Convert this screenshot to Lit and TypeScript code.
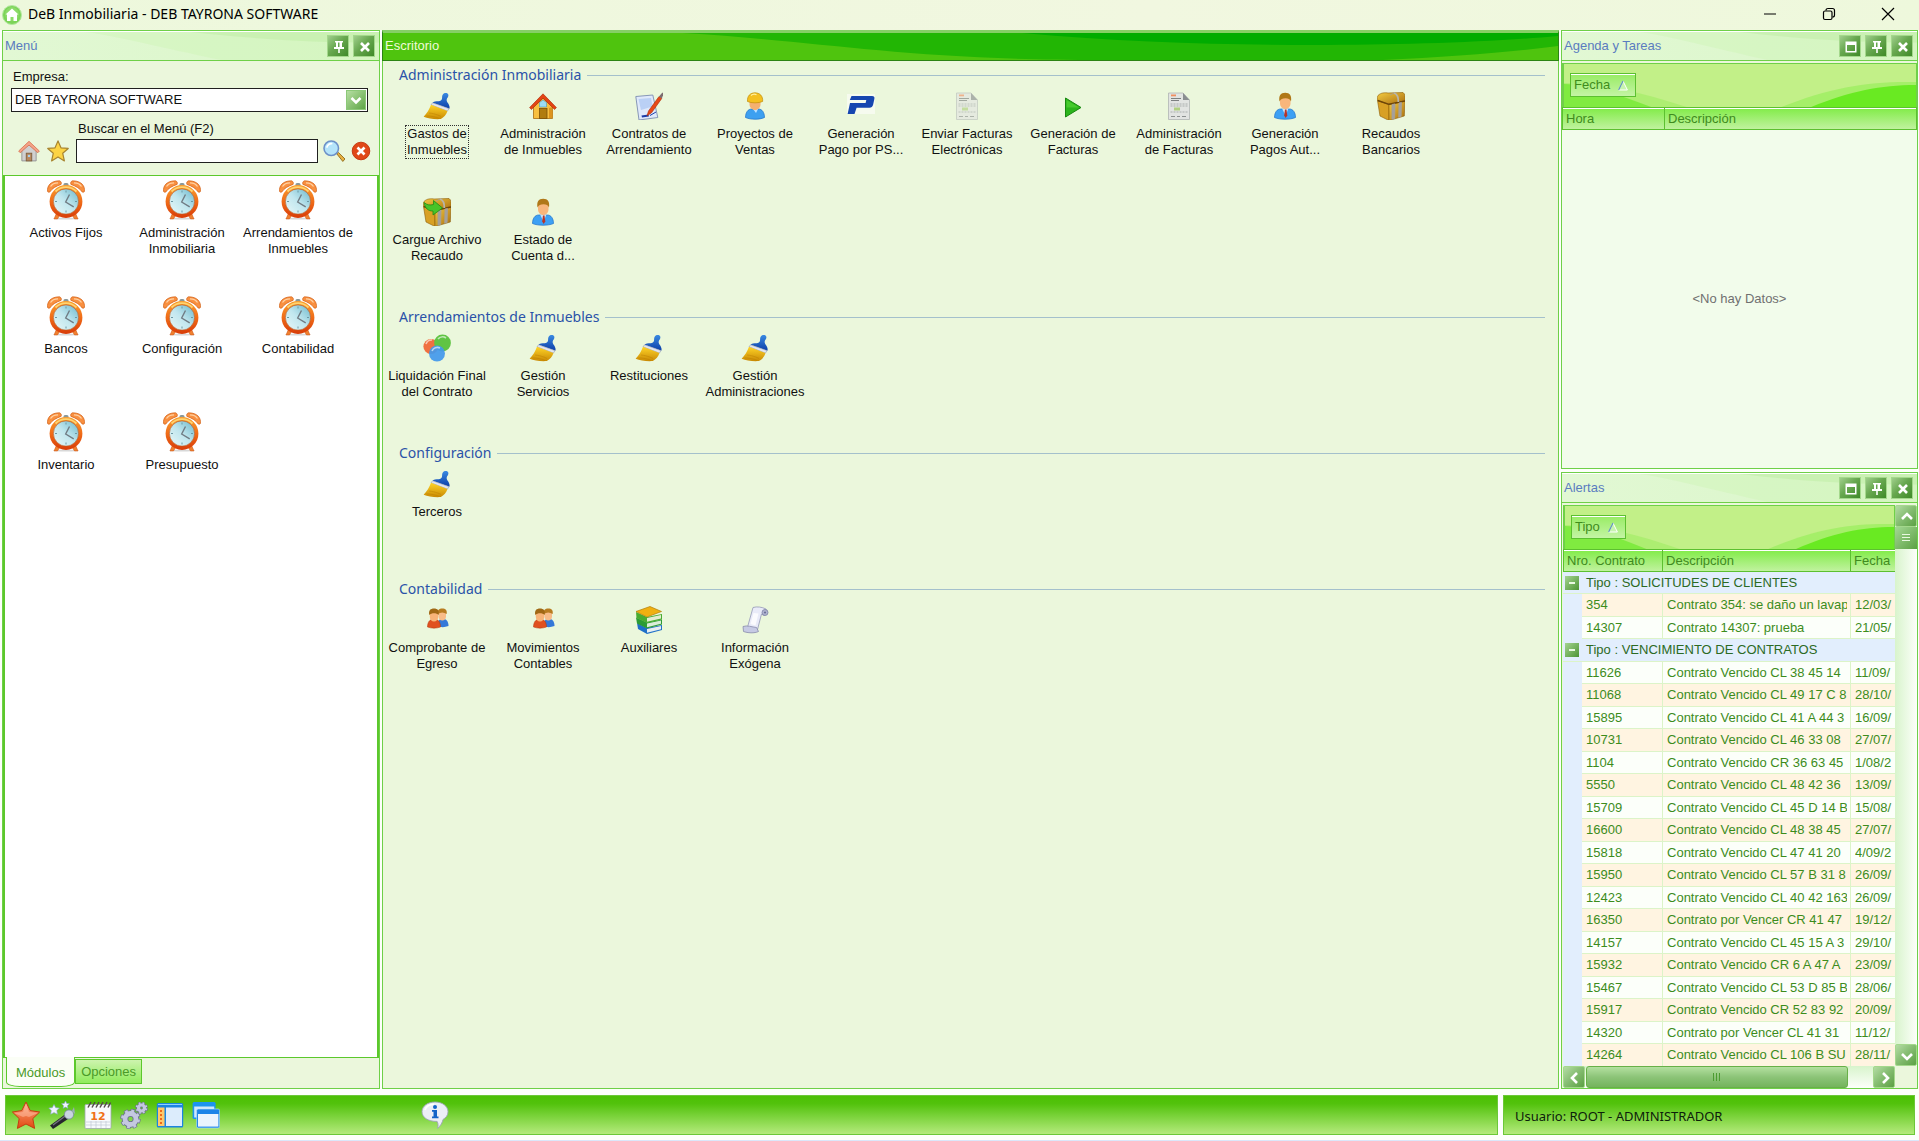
import { LitElement, html, css, nothing, TemplateResult } from "lit";
import { customElement, state } from "lit/decorators.js";
import { classMap } from "lit/directives/class-map.js";

/* ---------- desktop icons (28 x 28) ---------- */

const brush = html`<svg class="ico" viewBox="0 0 28 28" aria-hidden="true">
  <defs>
    <linearGradient id="brushY" x1="0" y1="0" x2="0" y2="1"><stop offset="0" stop-color="#ffd428" /><stop offset="1" stop-color="#c98a04" /></linearGradient>
    <linearGradient id="brushB" x1="0" y1="0" x2="0" y2="1"><stop offset="0" stop-color="#3a8ae2" /><stop offset="1" stop-color="#0c3ea8" /></linearGradient>
  </defs>
  <path d="M20 2.200c1.200-1.800 5.200-1.800 5.400.8.200 2-1.400 2.900-1.700 4.400-.3 1.400.6 2.600 1.400 3.800 1.200 2 2 3.800 1.200 5.600L9.600 10.800c.8-1.200 3.400-1.600 6-1.600 1.900-.1 3-.7 3.400-2.400.3-2-.1-3.200 1-4.600Z" fill="url(#brushB)" />
  <path d="M9.600 10.800 26 16.600l-1.600 2.500L8 12.800Z" fill="#e3e6ee" stroke="#7c88a8" stroke-width=".5" />
  <path d="M8 12.800 24.400 19.100c-.9 3.600-3.500 6.500-6.600 8C11.500 27.600 5 26.500.6 24.800 4 21.600 6.300 17 8 12.800Z" fill="url(#brushY)" />
  <path d="M3.400 24c4.200-.2 9.400.8 13 2.600M6 21c3 .2 8 1.400 12 3.400" fill="none" stroke="#b87800" stroke-width=".7" opacity=".6" />
</svg>`;

const house = html`<svg class="ico" viewBox="0 0 28 28" aria-hidden="true">
  <path d="M4.500 15 14 6l9.500 9v11.500h-19Z" fill="#f8c040" stroke="#a86c10" stroke-width=".8" />
  <path d="M20 16v10h3.500V15Z" fill="#dc9420" />
  <rect x="10.500" y="16.500" width="7.500" height="10" fill="#b07c10" stroke="#7c5008" stroke-width=".8" />
  <path d="M10.500 10.500 14 8l3.500 2.500V15h-7Z" fill="#9cdcf4" stroke="#4c9cc0" stroke-width=".6" />
  <path d="M.6 15.600 14 1.800l13.400 13.800-1.800 1.900L14 6.200 2.400 17.500Z" fill="#e44414" stroke="#a82808" stroke-width=".6" />
</svg>`;

const contract = html`<svg class="ico" viewBox="0 0 28 28" aria-hidden="true">
  <path d="m.8 4.500 17-1.500 5 22.500L4 28Z" fill="#dfe9fb" stroke="#7c8cb0" stroke-width=".9" />
  <path d="m3.500 7 12.500-1 1.500 8.500L6 18Z" fill="#a9c4f2" opacity=".7" />
  <path d="m6.500 23.500 7-1 .4 2-6.900 1Z" fill="#1c3ca8" />
  <path d="M15 23.500 21 20" stroke="#1c3ca8" stroke-width="1" />
  <path d="M13.500 19 24 4.500l2.800 1.900L16.500 20.800l-4.500 3Z" fill="#e84818" stroke="#a82c08" stroke-width=".6" />
  <path d="m24 4.500 3.400-4 1.300.9-1.900 5Z" fill="#7c6c70" />
</svg>`;

const builder = html`<svg class="ico" viewBox="0 0 28 28" aria-hidden="true">
  <path d="M4.500 25.500c0-5 2.500-8.500 6-8.500h7c3.500 0 6 3.500 6 8.500-5 2.300-14 2.300-19 0Z" fill="#3da0f0" stroke="#1c70c8" stroke-width=".7" />
  <path d="M12 17h5l-2 4Z" fill="#bfe2ff" />
  <path d="M8.500 8h11v4.500c0 3-2.600 5.500-5.500 5.500s-5.500-2.500-5.500-5.500Z" fill="#f4b070" />
  <path d="M6.500 9.500C6 4 9.300.8 14 .8s8.200 3.200 7.600 8.700c-4 1.800-11.200 1.800-15.100 0Z" fill="#f4c020" stroke="#c08c08" stroke-width=".7" />
  <path d="M10 3.500C11.500 2 14 2 15.500 2.600" stroke="#fff0a0" stroke-width="1.200" fill="none" />
</svg>`;

const pse = html`<svg class="ico" viewBox="0 0 28 28" aria-hidden="true">
  <rect y="2" width="28" height="20" fill="#fff" opacity=".55" />
  <path d="M4.500 4h20.500c2 0 2.800 1 2.400 2.800l-1.300 6c-.5 2-1.700 3-3.600 3H9.600L7.500 22H.6L3 11h15.600l.7-3H2.800Z" fill="#1646b0" fill-rule="evenodd" />
</svg>`;

const invoice = (faded: boolean) => html`<svg class=${faded ? "ico faded" : "ico"} viewBox="0 0 28 28" aria-hidden="true">
  <path d="M3.500 1H18l6.500 7v19.500h-21Z" fill="#e2e4e2" stroke="#b0b4b4" stroke-width=".8" />
  <path d="M18 1v7h6.500Z" fill="#8a8e90" />
  <rect x="6" y="2.500" width="5" height="1.800" fill="#f09060" />
  <path d="M6 6.500h10M6 8.500h8" stroke="#7c8080" stroke-width="1.200" />
  <path d="M5.500 12h17M5.500 14h17M5.500 20h17" stroke="#a4a8a8" stroke-width=".9" stroke-dasharray="2 1" />
  <rect x="9" y="15.500" width="6" height="3" fill="#b0d080" />
  <path d="M6 24.500h4M12 24.500h3M17 24.500h4" stroke="#8c9090" stroke-width="1.200" />
</svg>`;

const play = html`<svg class="ico" viewBox="0 0 28 28" aria-hidden="true">
  <path d="M6.500 6v19L22 15.500Z" fill="#2cb41c" stroke="#188810" stroke-width="1" />
  <path d="M7.500 8v7.500H20Z" fill="#5cdc3c" opacity=".55" />
</svg>`;

const person = html`<svg class="ico" viewBox="0 0 28 28" aria-hidden="true">
  <path d="M3.500 25.500c0-5 2.500-8.500 6-8.500h9c3.500 0 6 3.500 6 8.500-5 2.300-16 2.300-21 0Z" fill="#3da0f4" stroke="#1c70c8" stroke-width=".7" />
  <path d="M11 16.500h6.500l-3 7Z" fill="#c6e2f8" />
  <path d="m14 17.500 1.500 0 .8 6-1.600 2.500-1.500-2.500Z" fill="#b83428" />
  <path d="M9 6h10.500v5.500c0 3-2.400 5.500-5.200 5.500S9 14.500 9 11.500Z" fill="#f8b67c" />
  <path d="M8.500 9.500C7.500 4 9.500.8 14.200.8S21 4 20 9.500c-1-2.500-2.500-3.200-5.500-3.200S9.500 7 8.500 9.500Z" fill="#b07818" />
</svg>`;

const chest = (arrow: boolean) => html`<svg class="ico" viewBox="0 0 28 28" aria-hidden="true">
  <defs><linearGradient id="gold" x1="0" y1="0" x2="1" y2="1"><stop offset="0" stop-color="#f4cc40" /><stop offset="1" stop-color="#a86c10" /></linearGradient></defs>
  <path d="M.5 8.500 12 12.500v16L3 24Z" fill="#d8a024" stroke="#8c5c08" stroke-width=".6" />
  <path d="M12 12.500 28 9l-.7 15L12 28.500Z" fill="url(#gold)" stroke="#8c5c08" stroke-width=".6" />
  <path d="M1 3.500C4 .5 8 .5 11 1L26 .5c2 1 2.500 5 2 8.500L12 12.500.5 8.500C0 6.500.3 4.600 1 3.500Z" fill="url(#gold)" stroke="#8c5c08" stroke-width=".6" />
  <path d="M.8 8.500 12 12.300 28 9" fill="none" stroke="#6c4408" stroke-width="1.400" />
  <path d="m15 12.500 3-.6-.4 14.600-2.600.8ZM22 11l2.500-.6-.4 14-2.400.8ZM13 3l5-2.400" fill="#a4a09c" stroke="#a4a09c" stroke-width=".8" />
  <path d="M17 1c3 1 4.500 4 4.300 9" fill="none" stroke="#b8b4a8" stroke-width="1.800" />
  ${arrow
    ? html`<svg viewBox="0 0 28 28"><path d="M1 4.500c3 2.500 6 3 9.500 2V2.500l9 7.500-9.500 7v-4C5.500 13.200 2 10.500 1 4.500Z" fill="#48c428" stroke="#208c14" stroke-width=".8" /></svg>`
    : nothing}
</svg>`;

const bubbles = html`<svg class="ico" viewBox="0 0 28 28" aria-hidden="true">
  <circle cx="8" cy="12.500" r="7.600" fill="#f07040" /><circle cx="19.500" cy="9" r="8.400" fill="#60c444" /><circle cx="14" cy="19.500" r="8" fill="#4499ec" opacity=".93" />
  <path d="M3 10a6 6 0 0 1 6-4M15 5a6 6 0 0 1 8-1M9 17a6 6 0 0 1 8-3" fill="none" stroke="#fff" stroke-width="1.600" opacity=".6" />
</svg>`;

const people = html`<svg class="ico" viewBox="0 0 28 28" aria-hidden="true">
  <path d="M14 20c0-4 2-7 4.500-7h2.500c2.600 0 4.500 3 4.500 7-4 1.500-7.500 1.500-11.500 0Z" fill="#3478d8" />
  <path d="M15.500 6h7.500v4.500c0 2.400-1.600 4-3.700 4s-3.800-1.600-3.800-4Z" fill="#f8bc88" />
  <path d="M14.800 8c-.6-3.800 1.300-5.500 4.500-5.500s5 1.700 4.400 5.500c-3-2-6-2-8.900 0Z" fill="#b87c20" />
  <path d="M4.500 21c0-4.500 2-7.500 5-7.500h3c3 0 5 3 5 7.500-4 1.500-9 1.500-13 0Z" fill="#e05020" stroke="#b03408" stroke-width=".5" />
  <path d="M6.800 6.500h8.400v4.600c0 2.700-1.900 4.500-4.200 4.500s-4.200-1.800-4.200-4.500Z" fill="#f8b478" />
  <path d="M6.300 9C5.300 4.500 7.500 2.500 11 2.500s5.500 2 4.700 6.500C13.500 6.500 8.500 6.500 6.300 9Z" fill="#a06814" />
</svg>`;

const books = html`<svg class="ico" viewBox="0 0 28 28" aria-hidden="true">
  <path d="M2 17 12 22l15-3v5l-15 4L3 23Z" fill="#2070c8" /><path d="m12 23 14-3v3.200L12 26.800Z" fill="#e8eef0" />
  <path d="m1 11.500 11 5 15-3v5l-15 4L2 17.500Z" fill="#2c9c34" /><path d="m12 17.500 14-3v3.200l-14 3.500Z" fill="#dcecd8" />
  <path d="m1 6 11 5 15-3v5.500l-15 3.500L1.500 12Z" fill="#48ac30" /><path d="m12 12 14-3v3.500l-14 3.300Z" fill="#e4ecd0" />
  <path d="M1 5.500 15 .5l11.500 5L12 11Z" fill="#f0b010" stroke="#b07c08" stroke-width=".7" />
</svg>`;

const scroll = html`<svg class="ico" viewBox="0 0 28 28" aria-hidden="true">
  <path d="M12 1.500c4-1.200 9-.5 13 1.500l1.500 4-3.500 2.500-2.500-1.500-4.500 17.500L6 23Z" fill="#e9ebf8" stroke="#9498b8" stroke-width=".8" />
  <circle cx="24" cy="6.500" r="3" fill="#b0b4d0" stroke="#7c80a4" stroke-width=".8" /><circle cx="24" cy="6.500" r="1.100" fill="#6c7098" />
  <path d="M2 20.500c4-1.500 9 .5 13.500 1l2 4c-4 2-11 1.500-15 0Z" fill="#c6cae4" stroke="#888cac" stroke-width=".8" />
  <path d="m12.500 7-3 11 5 1.500 3-12Z" fill="#fff" opacity=".8" />
</svg>`;

const clock = html`<svg class="clock" viewBox="0 0 38 40" aria-hidden="true">
  <defs>
    <linearGradient id="ring" x1="0" y1="0" x2="0" y2="1"><stop offset="0" stop-color="#f9a030" /><stop offset=".5" stop-color="#f06c18" /><stop offset="1" stop-color="#d83c08" /></linearGradient>
    <linearGradient id="face" x1="1" y1="0" x2="0" y2="1"><stop offset="0" stop-color="#6cb8cc" /><stop offset=".5" stop-color="#c0e6ee" /><stop offset="1" stop-color="#e8f8f8" /></linearGradient>
  </defs>
  <ellipse cx="19" cy="38.600" rx="13" ry="1" fill="#d8d8d8" />
  <path d="m10 32-3 7h3.500l3-5ZM28 32l3 7h-3.500l-3-5Z" fill="#f08030" stroke="#c85010" stroke-width=".5" />
  <rect x="16.500" y="3" width="5" height="5" rx="1.500" fill="#8c9898" />
  <path d="M.6 11.500C-.2 6 3.500.8 12.500.8c1.600.5 2.200 2 1.600 3.600C9.500 6 5 8.300 2.800 12 1.800 12.400.9 12.200.6 11.500Z" fill="#f99040" stroke="#d05c10" stroke-width=".7" />
  <path d="M37.400 11.500C38.200 6 34.500.8 25.500.8c-1.600.5-2.200 2-1.600 3.600C28.500 6 33 8.300 35.200 12c1 .4 1.900.2 2.200-.5Z" fill="#f99040" stroke="#d05c10" stroke-width=".7" />
  <path d="M3.500 6.500C5 4 8 2.800 11 2.800M34.500 6.500C33 4 30 2.800 27 2.800" stroke="#ffd0a0" stroke-width="1.300" fill="none" />
  <circle cx="19" cy="21.500" r="16.400" fill="url(#ring)" />
  <path d="M8.500 11.500a14.600 14.600 0 0 1 21 0" stroke="#ffd470" stroke-width="1.800" fill="none" />
  <circle cx="19" cy="21.500" r="12.600" fill="url(#face)" stroke="#b85820" stroke-width=".6" />
  <path d="M19 10.500v2M19 30.500v2M8 21.500h2M28 21.500h2" stroke="#6c98a4" stroke-width="1" />
  <path d="m22.500 14.500-3.800 7.500 8 4.800" stroke="#707c84" stroke-width="1.400" fill="none" />
</svg>`;

/* ---------- small form icons ---------- */

const miniHouse = html`<svg class="mini" viewBox="0 0 20 20" aria-hidden="true">
  <path d="M3.500 9.500 10 4l6.500 5.500V19h-13Z" fill="#d0d0d0" stroke="#909090" stroke-width=".8" />
  <rect x="7.500" y="12" width="5" height="7" fill="#b8885c" stroke="#7c5c3c" stroke-width=".8" /><rect x="9" y="13.500" width="2" height="2" fill="#a8d0f0" />
  <path d="M.6 10 10 1.200 19.400 10 18 11.600 10 4.600 2 11.600Z" fill="#f4a488" stroke="#d86c4c" stroke-width=".7" />
</svg>`;

const miniStar = html`<svg class="mini" viewBox="0 0 20 20" aria-hidden="true">
  <path d="m10 .8 2.700 6.300 6.600.6-5 4.400 1.500 6.900L10 15.400 4.200 19l1.500-6.900-5-4.400 6.600-.6Z" fill="#fcd444" stroke="#a88430" stroke-width="1.100" stroke-linejoin="round" />
</svg>`;

const magnifier = html`<svg class="mini" viewBox="0 0 20 20" aria-hidden="true">
  <path d="m12.500 12.500 1.500-1.200 6 6-2 2.200Z" fill="#e8b040" stroke="#8c6818" stroke-width=".8" />
  <circle cx="7.500" cy="7.500" r="6.600" fill="#b4e4fa" stroke="#6c90c8" stroke-width="1.400" />
  <path d="M3.500 7a4.200 4.200 0 0 1 5-3.600" stroke="#fff" stroke-width="1.600" fill="none" />
</svg>`;

const clear = html`<svg class="mini" viewBox="0 0 20 20" aria-hidden="true">
  <circle cx="10" cy="10" r="8" fill="#e04818" stroke="#c03008" stroke-width=".8" />
  <path d="m6.800 6.800 6.400 6.400M13.200 6.800l-6.400 6.400" stroke="#fff" stroke-width="2.400" />
</svg>`;

/* ---------- panel buttons ---------- */

const glyphs: Record<string, TemplateResult> = {
  max: html`<svg viewBox="0 0 22 22" aria-hidden="true"><path fill-rule="evenodd" d="M5.500 5.500h11v11h-11Zm1.500 3.500v6h8v-6Z" fill="#fff" /></svg>`,
  pin: html`<svg viewBox="0 0 22 22" aria-hidden="true"><path fill-rule="evenodd" d="M7 5h8v1.500h-1V11h2v2h-4.200v4h-1.600v-4H6v-2h2V6.500H7Zm3 1.500V11h1.500V6.500Z" fill="#fff" /></svg>`,
  close: html`<svg viewBox="0 0 22 22" aria-hidden="true"><path d="m7 7 8 8M15 7l-8 8" stroke="#fff" stroke-width="2.600" /></svg>`,
  up: html`<svg viewBox="0 0 22 22" aria-hidden="true"><path d="m6 13 5-5 5 5" fill="none" stroke="#fff" stroke-width="2.600" /></svg>`,
  down: html`<svg viewBox="0 0 22 22" aria-hidden="true"><path d="m6 9 5 5 5-5" fill="none" stroke="#fff" stroke-width="2.600" /></svg>`,
  left: html`<svg viewBox="0 0 22 22" aria-hidden="true"><path d="m13 6-5 5 5 5" fill="none" stroke="#fff" stroke-width="2.600" /></svg>`,
  right: html`<svg viewBox="0 0 22 22" aria-hidden="true"><path d="m9 6 5 5-5 5" fill="none" stroke="#fff" stroke-width="2.600" /></svg>`,
};

const glyphNames: Record<string, string> = {
  max: "Maximizar", pin: "Fijar", close: "Cerrar", up: "Subir", down: "Bajar", left: "Izquierda", right: "Derecha",
};

const glyphButton = (name: string) => html`<button class="knob" aria-label=${glyphNames[name]}>${glyphs[name]}</button>`;

/* ---------- footer toolbar icons ---------- */

const footerIcons: [string, TemplateResult][] = [
  ["Favoritos", html`<svg viewBox="0 0 28 28" aria-hidden="true">
    <defs><linearGradient id="fstar" x1="0" y1="0" x2="0" y2="1"><stop offset="0" stop-color="#fbb090" /><stop offset=".5" stop-color="#f07848" /><stop offset="1" stop-color="#e04810" /></linearGradient></defs>
    <path d="m14 1 4.200 8.600 9.400 1.400-6.800 6.600 1.800 9.800-8.600-4.400-8.600 4.400 1.800-9.800L.4 11l9.400-1.400Z" fill="url(#fstar)" stroke="#c43c10" stroke-width="1" />
    <path d="m14 3 3 8 9 1-9 4-3-1-3 1-9-4 9-1Z" fill="#ffc4a8" opacity=".5" /></svg>`],
  ["Asistente", html`<svg viewBox="0 0 28 28" aria-hidden="true">
    <path d="M2 24.500 19 12l4 4L5 28Z" fill="#26262e" /><path d="m5 24 13-9.500" stroke="#747480" stroke-width="1.400" />
    <circle cx="21" cy="13.500" r="4.600" fill="#c8d4e0" stroke="#78889c" stroke-width=".8" /><path d="m24 10 2-4 1 7Z" fill="#9cacbc" />
    <path d="m6 3.500 1.700 3.200 3.600.4-2.500 2.500.6 3.600L6 11.600l-3.300 1.600.6-3.600L.8 7.100l3.500-.4ZM17.500 0l1.200 2.400 2.700.4-2 1.900.5 2.600-2.400-1.200-2.400 1.200.5-2.600-2-1.900 2.700-.4Z" fill="#f0f4ff" stroke="#8ca4d0" stroke-width=".6" /></svg>`],
  ["Calendario", html`<svg viewBox="0 0 28 28" aria-hidden="true">
    <rect x="1" y="3.500" width="26" height="24" rx="1" fill="#f8fafc" stroke="#a0a8b0" stroke-width=".8" /><path d="M2 21h24M2 24h24M7 20v7M12 20v7M17 20v7M22 20v7" stroke="#c0c8d4" stroke-width=".7" />
    <path d="M4 6.500 7 1M8 6.500 11 1M12 6.500 15 1M16 6.500 19 1M20 6.500 23 1M24 6.500 26.500 1.500" stroke="#544c48" stroke-width="1.500" />
    <text x="14" y="18.500" text-anchor="middle" class="cal">12</text></svg>`],
  ["Ajustes", html`<svg viewBox="0 0 28 28" aria-hidden="true">
    <g fill="none" stroke="#6c7090"><circle cx="10.500" cy="18" r="5.500" stroke-width="6.500" /><circle cx="10.500" cy="18" r="8.200" stroke-width="4" stroke-dasharray="3.900 2.540" />
    <circle cx="21.500" cy="7" r="3" stroke-width="4.600" /><circle cx="21.500" cy="7" r="5" stroke-width="2.800" stroke-dasharray="2.600 1.327" /></g>
    <g fill="none" stroke="#c4c8e0"><circle cx="10.500" cy="18" r="5.500" stroke-width="4.800" /><circle cx="10.500" cy="18" r="8" stroke-width="3" stroke-dasharray="2.800 3.483" stroke-dashoffset="-.5" />
    <circle cx="21.500" cy="7" r="3" stroke-width="3.200" /><circle cx="21.500" cy="7" r="4.800" stroke-width="2" stroke-dasharray="1.600 2.170" stroke-dashoffset="-.5" /></g></svg>`],
  ["Panel lateral", html`<svg viewBox="0 0 28 28" aria-hidden="true">
    <rect x=".8" y="2" width="26.400" height="24.500" rx="1.500" fill="#1c84e0" /><rect x="2" y="6.500" width="6.500" height="18.500" fill="#ffc868" />
    <rect x="10" y="6.500" width="16" height="18.500" fill="#dcecfc" /><path d="M5 9v14" stroke="#f06818" stroke-width="2" stroke-dasharray="2 2" />
    <path d="M2 3.500h24" stroke="#90d0ff" stroke-width="1" /></svg>`],
  ["Ventanas", html`<svg viewBox="0 0 28 28" aria-hidden="true">
    <rect x=".6" y="1" width="23" height="17" rx="1.500" fill="#1c94f0" /><rect x="2.200" y="5.500" width="20" height="11" fill="#d0e8fc" />
    <rect x="4.600" y="8" width="23" height="19" rx="1.500" fill="#1c84e8" stroke="#c0e4ff" stroke-width=".6" /><rect x="6" y="13" width="20.400" height="12.600" fill="#eaf4fe" /></svg>`],
];

const infoIcon = html`<svg viewBox="0 0 28 28" aria-hidden="true">
  <path d="M14 1c7.400 0 13 4.200 13 9.700 0 3.500-2 6-5 7.800-.5 3-2.500 6.500-5.500 8.900.8-2.400.8-4.700-.4-7C7 20.600 1 16.400 1 10.700 1 5.200 6.600 1 14 1Z" fill="#eceef6" stroke="#9ca4b4" stroke-width=".9" />
  <path d="M4 9c1-3.500 5-5.600 9-5.600" stroke="#fff" stroke-width="1.800" fill="none" />
  <circle cx="14" cy="6" r="2" fill="#1464c8" /><path d="M11 9h5v6.500h1.500v1.800H11v-1.800h1.500v-4.700H11Z" fill="#1464c8" />
</svg>`;

/* ---------- data ---------- */

interface Shortcut { label: string[]; icon: TemplateResult; }
const sc = (icon: TemplateResult, ...label: string[]): Shortcut => ({ icon, label });

const groups: { title: string; items: Shortcut[] }[] = [
  { title: "Administración Inmobiliaria", items: [
    sc(brush, "Gastos de", "Inmuebles"), sc(house, "Administración", "de Inmuebles"), sc(contract, "Contratos de", "Arrendamiento"),
    sc(builder, "Proyectos de", "Ventas"), sc(pse, "Generación", "Pago por PS..."), sc(invoice(true), "Enviar Facturas", "Electrónicas"),
    sc(play, "Generación de", "Facturas"), sc(invoice(false), "Administración", "de Facturas"), sc(person, "Generación", "Pagos Aut..."),
    sc(chest(false), "Recaudos", "Bancarios"), sc(chest(true), "Cargue Archivo", "Recaudo"), sc(person, "Estado de", "Cuenta d..."),
  ] },
  { title: "Arrendamientos de Inmuebles", items: [
    sc(bubbles, "Liquidación Final", "del Contrato"), sc(brush, "Gestión", "Servicios"), sc(brush, "Restituciones"), sc(brush, "Gestión", "Administraciones"),
  ] },
  { title: "Configuración", items: [sc(brush, "Terceros")] },
  { title: "Contabilidad", items: [
    sc(people, "Comprobante de", "Egreso"), sc(people, "Movimientos", "Contables"), sc(books, "Auxiliares"), sc(scroll, "Información", "Exógena"),
  ] },
];

const modules: string[][] = [
  ["Activos Fijos"], ["Administración", "Inmobiliaria"], ["Arrendamientos de", "Inmuebles"], ["Bancos"],
  ["Configuración"], ["Contabilidad"], ["Inventario"], ["Presupuesto"],
];

const alerts: { type: string; rows: [string, string, string][] }[] = [
  { type: "SOLICITUDES DE CLIENTES", rows: [
    ["354", "Contrato 354: se daño un lavap", "12/03/"],
    ["14307", "Contrato 14307: prueba", "21/05/"],
  ] },
  { type: "VENCIMIENTO DE CONTRATOS", rows: [
    ["11626", "Contrato Vencido CL 38 45 14", "11/09/"],
    ["11068", "Contrato Vencido CL 49 17 C 8", "28/10/"],
    ["15895", "Contrato Vencido CL 41 A 44 3", "16/09/"],
    ["10731", "Contrato Vencido CL 46 33 08", "27/07/"],
    ["1104", "Contrato Vencido CR 36 63 45", "1/08/2"],
    ["5550", "Contrato Vencido CL 48 42 36", "13/09/"],
    ["15709", "Contrato Vencido CL 45 D 14 B", "15/08/"],
    ["16600", "Contrato Vencido CL 48 38 45", "27/07/"],
    ["15818", "Contrato Vencido CL 47 41 20", "4/09/2"],
    ["15950", "Contrato Vencido CL 57 B 31 8", "26/09/"],
    ["12423", "Contrato Vencido CL 40 42 163", "26/09/"],
    ["16350", "Contrato por Vencer CR 41 47", "19/12/"],
    ["14157", "Contrato Vencido CL 45 15 A 3", "29/10/"],
    ["15932", "Contrato Vencido CR 6 A 47 A", "23/09/"],
    ["15467", "Contrato Vencido CL 53 D 85 B", "28/06/"],
    ["15917", "Contrato Vencido CR 52 83 92", "20/09/"],
    ["14320", "Contrato por Vencer CL 41 31", "11/12/"],
    ["14264", "Contrato Vencido CL 106 B SU", "28/11/"],
  ] },
];

const lines = (parts: string[]) => parts.map((p, i) => (i ? html`<br />${p}` : p));

@customElement("app-root")
export class AppRoot extends LitElement {
  @state() private selected = "0-0";

  static styles = css`
    :host { display: block; --line: #6fd048; --ui: "Liberation Sans", Arial, sans-serif; --title: "Noto Sans", "Open Sans", sans-serif; }
    *, *::before, *::after { box-sizing: border-box; }
    button, input, select { font: inherit; color: inherit; margin: 0; padding: 0; border: 0; background: none; border-radius: 0; }
    h1, h2, h3, p { margin: 0; font-weight: 400; }
    .app { display: flex; flex-direction: column; min-height: 100vh; background: #fdfffb; font: 13px/16px var(--ui); color: #101010; border-bottom: 1px solid #dbe7fa; }

    .titlebar { display: flex; align-items: center; height: 30px; background: linear-gradient(90deg, #edf8dc, #f1f7e0 60%, #eef8dc); }
    .titlebar h1 { flex: 1; font: 14px/20px var(--title); margin-left: 6px; padding-bottom: 2px; color: #000; }
    .logo { width: 20px; height: 20px; margin-left: 2px; }
    .winbtns { display: flex; padding: 0 2px 2px 0; }
    .winbtns button { width: 59px; height: 28px; display: grid; place-items: center; }
    .winbtns svg { width: 14px; height: 14px; }

    .work { flex: 1; display: grid; grid-template-columns: 378px minmax(0, 1fr) 357px; gap: 2px; padding: 0 1px 0 2px; }
    .panel { border: 1px solid var(--line); background: #ebf7dc; display: flex; flex-direction: column; min-height: 0; min-width: 0; }
    .head { position: relative; height: 30px; flex: none; display: flex; align-items: center; gap: 4px; padding: 0 4px 0 2px; border-bottom: 1px solid var(--line); background: linear-gradient(90deg, #e2f8d4, #d9f6c8); box-shadow: inset 0 1px 0 #fff; }
    .head h2 { position: relative; flex: 1; font: 13px/16px var(--ui); color: #5a7cc0; }
    .swoosh { position: absolute; left: 0; top: 0; width: 100%; height: 100%; }
    .knob { position: relative; flex: none; width: 22px; height: 22px; border: 1px solid #a4d88c; background: linear-gradient(135deg, #a0cf8c 0%, #68a850 45%, #3f8a28 100%); display: grid; place-items: center; }
    .knob svg { width: 22px; height: 22px; }

    .form { padding: 7px 7px 0 8px; height: 114px; flex: none; }
    .form > label { display: block; line-height: 18px; padding-left: 2px; }
    .combo { position: relative; display: block; margin: 2px 4px 0 0; }
    .combo select { width: 100%; height: 24px; border: 1px solid #202020; background: #fff; appearance: none; padding: 0 24px 0 3px; display: block; }
    .combo svg { position: absolute; right: 2px; top: 2px; width: 20px; height: 20px; pointer-events: none; }
    .form .find { padding-left: 67px; margin-top: 8px; }
    .search { display: flex; align-items: center; gap: 5px; padding: 1px 0 0 7px; }
    .search .ibtn { width: 22px; height: 22px; }
    .search .lead { margin-right: 2px; }
    .search input { flex: 1; min-width: 0; height: 24px; border: 1px solid #202020; background: #fff; padding: 0 4px; }
    .mini { width: 22px; height: 22px; display: block; }

    .modules { flex: 1; background: #fff; border: 2px solid #5cc82c; border-top-width: 1px; border-bottom-width: 1px; padding: 1px 0 0 3px; display: grid; grid-template-columns: repeat(auto-fill, 116px); grid-auto-rows: 116px; align-content: start; }
    .mod { display: flex; flex-direction: column; align-items: center; gap: 5px; padding-top: 3px; text-align: center; line-height: 16px; white-space: nowrap; }
    .clock { width: 38px; height: 40px; }
    .tabs { display: flex; align-items: flex-start; height: 30px; flex: none; padding: 0 0 0 3px; line-height: 16px; color: #4a9a28; }
    .tab { height: 25px; padding: 0 5px; }
    .tab.on { height: 30px; margin-top: -1px; padding: 2px 9px 0; background: #fbfef6; border: 1px solid #5cc82c; border-top: 0; border-radius: 0 0 14px 14px / 0 0 5px 5px; }
    .tab.off { border: 1px solid #5cc82c; background: linear-gradient(#cdf3ae, #90ec5c); margin-top: 1px; }

    .desk { background: #ebf7dc; }
    .desk .head { margin: -1px -1px 0; height: 31px; background: #4fc40e; border: 1px solid #2c8414; border-top: 3px solid #86cf66; box-shadow: none; }
    .desk .head h2 { color: #effbd8; padding-bottom: 2px; }
    .groups { padding: 0 13px 0 1px; }
    .group h3 { display: flex; align-items: center; gap: 6px; height: 30px; padding: 0 0 2px 15px; font: 14px/20px var(--title); color: #2a52a8; }
    .group h3::after { content: ""; flex: 1; height: 1px; background: #a4c0cc; }
    .grid { display: grid; grid-template-columns: repeat(auto-fill, 106px); grid-auto-rows: 106px; }
    .cut { display: flex; flex-direction: column; align-items: center; gap: 5px; padding-top: 1px; text-align: center; line-height: 16px; white-space: nowrap; }
    .ico { width: 28px; height: 28px; display: block; }
    .ico.faded { opacity: .65; }
    .cap { border: 1px solid transparent; padding: 0 1px; }
    .cut.sel .cap { border: 1px dotted #303030; }

    .side { display: flex; flex-direction: column; gap: 3px; min-width: 0; }
    .agenda { flex: 439 1 0; }
    .alertas { flex: 617 1 0; }
    .groupby { position: relative; flex: none; height: 44px; margin-top: 2px; border: 1px solid var(--line); border-left-width: 2px; border-bottom: 0; background: #c2f088; padding: 9px 6px; }
    .chip { position: relative; display: flex; align-items: center; gap: 8px; width: max-content; height: 24px; padding: 0 7px 0 3px; border: 1px solid #5cc030; background: linear-gradient(#98ec64, #c4f4a4); box-shadow: inset 0 1px 0 #fff; color: #3f8c1c; }
    .chip svg { width: 10px; height: 11px; }
    table { border-collapse: separate; border-spacing: 0; table-layout: fixed; }
    th { height: 23px; padding: 0 3px; text-align: left; font-weight: 400; color: #408a20; border: 1px solid #5cc030; border-left-width: 0; background: linear-gradient(#fff 1px, #84ec4c 1px, #c0f29e); overflow: hidden; white-space: nowrap; }
    th:first-child { border-left-width: 1px; }
    .agenda table { width: 100%; }
    .agenda .c1 { width: 103px; }
    .empty { flex: 1; display: grid; place-items: center; background: #f2fceb; color: #707070; }

    .alertbody { flex: 1; display: grid; grid-template-columns: minmax(0, 1fr) 22px; grid-template-rows: minmax(0, 1fr) 22px; min-height: 0; padding-left: 1px; }
    .viewport { overflow: hidden; margin-top: 2px; background: #e2eefd; }
    .viewport .groupby { margin-top: 0; }
    .viewport table { width: 376px; }
    .ci { width: 19px; } .cn { width: 81px; } .cd { width: 188px; } .cf { width: 88px; }
    td { height: 22px; padding: 0 3px 0 4px; color: #3c8c1c; background: #fcfffa; border-right: 1px solid #dcf4c8; border-bottom: 1px solid #dcf4c8; }
    tr.tall td { height: 23px; }
    tr.alt td { background: #fff4e1; }
    tr td.ind, tr.type td { background: #e2eefd; border-color: #e2eefd; }
    tr.type td { color: #2c6a24; padding: 0 2px; border-bottom-color: #dcf4c8; }
    .clip { overflow: hidden; white-space: nowrap; }
    .typecell { display: flex; align-items: center; gap: 7px; }
    .mark { flex: none; width: 14px; height: 14px; background: linear-gradient(135deg, #a4d490, #4c9434); display: grid; place-items: center; }
    .mark::after { content: ""; width: 6px; height: 2px; background: #e8f8e0; }
    .vs { display: flex; flex-direction: column; background: linear-gradient(90deg, #d8f4cc, #fcfffa); margin-top: 2px; }
    .vs .knob, .hs .knob { background: linear-gradient(135deg, #b4dca4, #84bc70 50%, #5ca044); border-radius: 2px; }
    .vs .thumb { height: 22px; flex: none; background: linear-gradient(135deg, #a4d894, #5ca044); display: grid; place-items: center; }
    .vs .fill, .hs .fill { flex: 1; }
    .hs { display: flex; background: linear-gradient(#d8f4cc, #fcfffa); }
    .hs .thumb { flex: none; width: 262px; margin-left: 1px; border: 1px solid #68b048; border-radius: 3px; background: linear-gradient(#b4e0a0, #8cc478 50%, #74b45c); display: grid; place-items: center; }
    .bars { width: 8px; height: 8px; background: repeating-linear-gradient(90deg, #4c9c30 0 1px, transparent 1px 3px); }
    .vs .bars { background: repeating-linear-gradient(#e8f8e0 0 1px, transparent 1px 3px); }

    .foot { display: grid; grid-template-columns: minmax(0, 1fr) 412px; gap: 5px; padding: 6px 4px 5px 5px; }
    .bar { height: 40px; border: 1px solid #6cc838; background: linear-gradient(#4cc004, #52c20c 20%, #b4ea7c); display: flex; align-items: center; }
    .tools { gap: 8px; padding: 0 6px; }
    .tools button { width: 28px; height: 28px; flex: none; }
    .tools svg { width: 28px; height: 28px; display: block; }
    .tools .info { margin-left: 193px; }
    .cal { font: bold 11px "DejaVu Sans", sans-serif; fill: #f07018; }
    .user { padding: 2px 0 0 11px; font: 13px/18px "Noto Sans", sans-serif; color: #0c200a; }
  `;

  private head(title: string, buttons: string[]) {
    return html`<header class="head">
      <svg class="swoosh" viewBox="0 0 100 30" preserveAspectRatio="none" aria-hidden="true">
        <path d="M22 1c8 4 20 16 36 29h42V1Z" fill="#d2f5bc" opacity=".6" /><path d="M50 1c14 6 30 11 50 11V1Z" fill="#c4f0ac" opacity=".7" />
      </svg>
      <h2>${title}</h2>${buttons.map(glyphButton)}
    </header>`;
  }

  private groupBy(name: string) {
    return html`<div class="groupby">
      <svg class="swoosh" viewBox="0 0 356 43" preserveAspectRatio="none" aria-hidden="true">
        <path d="M0 19c40 0 80 10 124 24H0Z" fill="#a8ee6c" opacity=".8" /><path d="M0 20c26 1 60 12 88 23H0Z" fill="#74ea34" opacity=".8" />
        <path d="M220 43c50-20 90-26 136-25v25Z" fill="#98ee5c" opacity=".7" /><path d="M250 43c40-16 70-22 106-22v22Z" fill="#69ea22" />
      </svg>
      <button class="chip">${name}
        <svg viewBox="0 0 10 11" aria-hidden="true"><path d="M5 1 9.400 10H.6Z" fill="#c8f4b0" stroke="#fff" stroke-width="1" /><path d="M.6 10 5 1" stroke="#5c94b8" stroke-width="1.200" /></svg>
      </button>
    </div>`;
  }

  private alertRows() {
    let n = 0;
    return alerts.map((g) => {
      const typeRow = html`<tr class=${classMap({ type: true, tall: n++ % 2 === 1 })}>
        <td colspan="4"><div class="typecell"><span class="mark"></span><span>Tipo : ${g.type}</span></div></td></tr>`;
      const rows = g.rows.map((r) => {
        const odd = n++ % 2 === 1;
        return html`<tr class=${classMap({ tall: odd, alt: odd })}>
          <td class="ind"></td>${r.map((c) => html`<td><div class="clip">${c}</div></td>`)}</tr>`;
      });
      return [typeRow, ...rows];
    });
  }

  render() {
    return html`<div class="app">
      <header class="titlebar">
        <svg class="logo" viewBox="0 0 20 20" aria-hidden="true"><circle cx="10" cy="10" r="9.500" fill="#7cd458" stroke="#b4e8a0" /><circle cx="10" cy="9" r="7" fill="#98e074" opacity=".6" /><path d="m10 3.500 6.500 6H15V16h-3.500v-4h-3v4H5V9.500H3.500Z" fill="#fff" /></svg>
        <h1>DeB Inmobiliaria - DEB TAYRONA SOFTWARE</h1>
        <div class="winbtns">
          <button aria-label="Minimizar"><svg viewBox="0 0 14 14"><path d="M1 7h12" stroke="#000" stroke-width="1" /></svg></button>
          <button aria-label="Restaurar"><svg viewBox="0 0 14 14" fill="none" stroke="#000" stroke-width="1.200"><rect x="1.500" y="4" width="8.500" height="8.500" rx="1.500" /><path d="M4 3.500C4 2 5 1.500 6 1.500h4.500c1.500 0 2 .8 2 2V8c0 1.500-.6 2-2 2" /></svg></button>
          <button aria-label="Cerrar"><svg viewBox="0 0 14 14"><path d="m1 1 12 12M13 1 1 13" stroke="#000" stroke-width="1.200" /></svg></button>
        </div>
      </header>

      <main class="work">
        <section class="panel">
          ${this.head("Menú", ["pin", "close"])}
          <div class="form">
            <label for="empresa">Empresa:</label>
            <span class="combo">
              <select id="empresa"><option>DEB TAYRONA SOFTWARE</option></select>
              <svg viewBox="0 0 20 20" aria-hidden="true"><defs><linearGradient id="drop" x1="0" y1="0" x2="1" y2="1"><stop offset="0" stop-color="#b8e0a4" /><stop offset="1" stop-color="#5ca444" /></linearGradient></defs><rect x=".5" y=".5" width="19" height="19" fill="url(#drop)" stroke="#8cc878" /><path d="m5.500 8 4.500 4.500L14.500 8" fill="none" stroke="#fff" stroke-width="2.600" /></svg>
            </span>
            <label class="find" for="buscar">Buscar en el Menú (F2)</label>
            <div class="search">
              <button class="ibtn lead" aria-label="Inicio">${miniHouse}</button>
              <button class="ibtn lead" aria-label="Favoritos">${miniStar}</button>
              <input id="buscar" type="text" />
              <button class="ibtn" aria-label="Buscar">${magnifier}</button>
              <button class="ibtn" aria-label="Limpiar">${clear}</button>
            </div>
          </div>
          <div class="modules">${modules.map((m) => html`<button class="mod">${clock}<span>${lines(m)}</span></button>`)}</div>
          <div class="tabs"><button class="tab on">Módulos</button><button class="tab off">Opciones</button></div>
        </section>

        <section class="panel desk">
          <header class="head">
            <svg class="swoosh" viewBox="0 0 1176 27" preserveAspectRatio="none" aria-hidden="true">
              <path d="M300 0C440 8 520 27 720 27h280c70-3 130-8 176-14V0Z" fill="#22b604" /><path d="M640 0c100 9 200 12 290 12s180-3 246-9V0Z" fill="#00ac00" />
            </svg>
            <h2>Escritorio</h2>
          </header>
          <div class="groups">${groups.map((g, gi) => html`<section class="group">
            <h3>${g.title}</h3>
            <div class="grid">${g.items.map((it, i) => {
              const id = `${gi}-${i}`;
              return html`<button class=${classMap({ cut: true, sel: this.selected === id })} @click=${() => (this.selected = id)}>${it.icon}<span class="cap">${lines(it.label)}</span></button>`;
            })}</div>
          </section>`)}</div>
        </section>

        <aside class="side">
          <section class="panel agenda">
            ${this.head("Agenda y Tareas", ["max", "pin", "close"])}
            ${this.groupBy("Fecha")}
            <table><thead><tr><th class="c1">Hora</th><th>Descripción</th></tr></thead></table>
            <div class="empty">&lt;No hay Datos&gt;</div>
          </section>
          <section class="panel alertas">
            ${this.head("Alertas", ["max", "pin", "close"])}
            <div class="alertbody">
              <div class="viewport">
                ${this.groupBy("Tipo")}
                <table>
                  <colgroup><col class="ci" /><col class="cn" /><col class="cd" /><col class="cf" /></colgroup>
                  <thead><tr><th colspan="2">Nro. Contrato</th><th>Descripción</th><th>Fecha</th></tr></thead>
                  <tbody>${this.alertRows()}</tbody>
                </table>
              </div>
              <div class="vs">${glyphButton("up")}<div class="thumb"><span class="bars"></span></div><div class="fill"></div>${glyphButton("down")}</div>
              <div class="hs">${glyphButton("left")}<div class="thumb"><span class="bars"></span></div><div class="fill"></div>${glyphButton("right")}</div>
            </div>
          </section>
        </aside>
      </main>

      <footer class="foot">
        <div class="bar tools">
          ${footerIcons.map(([name, icon]) => html`<button aria-label=${name}>${icon}</button>`)}
          <button class="info" aria-label="Información">${infoIcon}</button>
        </div>
        <div class="bar user">Usuario: ROOT - ADMINISTRADOR</div>
      </footer>
    </div>`;
  }
}
